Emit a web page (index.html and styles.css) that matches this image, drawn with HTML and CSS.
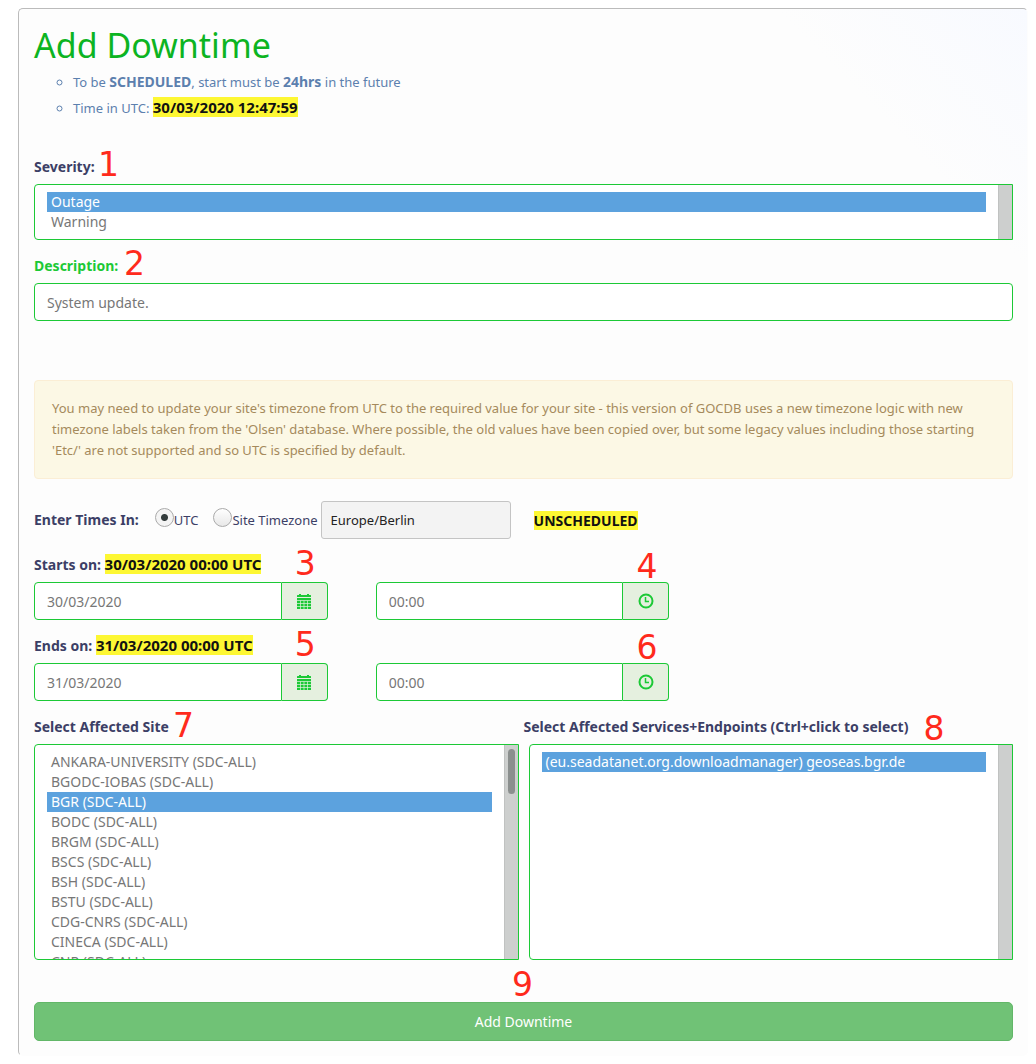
FILE: index.html
```html
<!DOCTYPE html>
<html lang="en">
<head>
<meta charset="utf-8">
<title>Add Downtime</title>
<link rel="stylesheet" href="styles.css">
</head>
<body>
<main class="panel">
  <h1 class="title">Add Downtime</h1>
  <ul class="notes">
    <li>To be <strong>SCHEDULED</strong>, start must be <strong>24hrs</strong> in the future</li>
    <li>Time in UTC: <mark>30/03/2020 12:47:59</mark></li>
  </ul>

  <form class="form">
    <div class="field severity">
      <label class="label" for="severity">Severity:</label>
      <span class="step step-1">1</span>
      <div class="list-box list-box-short">
        <select class="list" id="severity" size="2">
          <option selected>Outage</option>
          <option>Warning</option>
        </select>
        <span class="track"></span>
      </div>
    </div>

    <div class="field description">
      <label class="label label-valid" for="description">Description:</label>
      <span class="step step-2">2</span>
      <input class="control" id="description" type="text" value="System update.">
    </div>

    <p class="warning">You may need to update your site's timezone from UTC to the required value for your site - this version of GOCDB uses a new timezone logic with new timezone labels taken from the 'Olsen' database. Where possible, the old values have been copied over, but some legacy values including those starting 'Etc/' are not supported and so UTC is specified by default.</p>

    <div class="zone">
      <span class="label">Enter Times In:</span>
      <label class="choice"><input type="radio" name="zone" checked>UTC</label>
      <label class="choice"><input type="radio" name="zone">Site Timezone</label>
      <input class="zone-name" type="text" value="Europe/Berlin" aria-label="Site timezone" readonly>
      <mark class="status">UNSCHEDULED</mark>
    </div>

    <div class="field moment">
      <label class="label" for="start-date">Starts on: <mark>30/03/2020 00:00 UTC</mark></label>
      <div class="pickers">
        <div class="group">
          <span class="step step-date">3</span>
          <input class="control" id="start-date" type="text" value="30/03/2020">
          <button class="addon" type="button" aria-label="Pick start date"><svg class="icon" viewBox="0 0 16 16"><path d="M1 4V2.500Q1 2 1.500 2H3V1h2v1h6V1h2v1h1.500q.5 0 .5.500V4zM1 5h14v11H1z"/><path class="lines" d="M1 7.500h14M1 10.500h14M1 13.500h14M4.500 7.500V16M8 7.500V16M11.500 7.500V16"/></svg></button>
        </div>
        <div class="group">
          <span class="step step-time">4</span>
          <input class="control" type="text" value="00:00" aria-label="Start time">
          <button class="addon" type="button" aria-label="Pick start time"><svg class="icon clock-icon" viewBox="0 0 16 16"><circle cx="8" cy="8" r="6.500"/><path d="M7.500 4v4.500H11"/></svg></button>
        </div>
      </div>
    </div>

    <div class="field moment">
      <label class="label" for="end-date">Ends on: <mark>31/03/2020 00:00 UTC</mark></label>
      <div class="pickers">
        <div class="group">
          <span class="step step-date">5</span>
          <input class="control" id="end-date" type="text" value="31/03/2020">
          <button class="addon" type="button" aria-label="Pick end date"><svg class="icon" viewBox="0 0 16 16"><path d="M1 4V2.500Q1 2 1.500 2H3V1h2v1h6V1h2v1h1.500q.5 0 .5.500V4zM1 5h14v11H1z"/><path class="lines" d="M1 7.500h14M1 10.500h14M1 13.500h14M4.500 7.500V16M8 7.500V16M11.500 7.500V16"/></svg></button>
        </div>
        <div class="group">
          <span class="step step-time">6</span>
          <input class="control" type="text" value="00:00" aria-label="End time">
          <button class="addon" type="button" aria-label="Pick end time"><svg class="icon clock-icon" viewBox="0 0 16 16"><circle cx="8" cy="8" r="6.500"/><path d="M7.500 4v4.500H11"/></svg></button>
        </div>
      </div>
    </div>

    <div class="affected">
      <div class="field sites">
        <label class="label" for="sites">Select Affected Site</label>
        <span class="step step-7">7</span>
        <div class="list-box">
          <select class="list" id="sites" size="10">
            <option>ANKARA-UNIVERSITY (SDC-ALL)</option>
            <option>BGODC-IOBAS (SDC-ALL)</option>
            <option selected>BGR (SDC-ALL)</option>
            <option>BODC (SDC-ALL)</option>
            <option>BRGM (SDC-ALL)</option>
            <option>BSCS (SDC-ALL)</option>
            <option>BSH (SDC-ALL)</option>
            <option>BSTU (SDC-ALL)</option>
            <option>CDG-CNRS (SDC-ALL)</option>
            <option>CINECA (SDC-ALL)</option>
            <option>CNR (SDC-ALL)</option>
          </select>
          <span class="track"><span class="thumb"></span></span>
        </div>
      </div>
      <div class="field services">
        <label class="label" for="services">Select Affected Services+Endpoints (Ctrl+click to select)</label>
        <span class="step step-8">8</span>
        <div class="list-box">
          <select class="list" id="services" size="10" multiple>
            <option selected>(eu.seadatanet.org.downloadmanager) geoseas.bgr.de</option>
          </select>
          <span class="track"></span>
        </div>
      </div>
    </div>

    <div class="actions">
      <span class="step step-9">9</span>
      <button class="submit" type="submit">Add Downtime</button>
    </div>
  </form>
</main>
</body>
</html>
```
FILE: styles.css
```css
* { box-sizing: border-box; }

body {
  margin: 0;
  padding: 8px 8px 8px 18px;
  background: #fff;
  color: #3c3f66;
  font: 13px/20px "Noto Sans", sans-serif;
}

.panel {
  padding: 16px 14px 14px 15px;
  border: 1px solid #bbb;
  border-right-color: #fdfdfd;
  border-bottom-color: #fdfdfd;
  border-radius: 5px;
  background: linear-gradient(to bottom left, #f8faff, #fdfdfd 180px);
}

.title {
  margin: 0;
  color: #0cb422;
  font-size: 34px;
  font-weight: 400;
  line-height: 40px;
}

.notes {
  margin: 4px 0 36px;
  padding-left: 39px;
  color: #5c80ae;
  line-height: 26px;
  list-style: circle;
}

.notes li { height: 26px; }

mark {
  background: #fdf733;
  color: #111;
  font-size: 15px;
  font-weight: 700;
  line-height: 19px;
}

strong {
  font-size: 14px;
  font-weight: 700;
}

.field { position: relative; }

.label {
  display: block;
  height: 20px;
  margin-bottom: 7px;
  font-size: 14px;
  font-weight: 700;
}

.label-valid { color: #1cc936; }

.control {
  display: block;
  width: 100%;
  height: 38px;
  margin: 0;
  padding: 6px 12px;
  border: 1px solid #1cc936;
  border-radius: 4px;
  outline: 0;
  background: #fff;
  color: #777;
  font: 14px/20px "Noto Sans", sans-serif;
}

.list-box {
  display: flex;
  height: 216px;
  overflow: hidden;
  border: 1px solid #1cc936;
  border-radius: 4px 0 0 4px;
  background: #fff;
}

.list-box-short { height: 56px; }

.list {
  flex: 1;
  min-width: 0;
  height: 100%;
  margin: 0;
  padding: 7px 12px;
  border: 0;
  outline: 0;
  background: transparent;
  color: #777;
  font: 14px/20px "Noto Sans", sans-serif;
  scrollbar-width: none;
}

.list option {
  min-height: 20px;
  padding: 0 4px;
  line-height: 20px;
}

.list option:checked {
  background: #5ca2de linear-gradient(#5ca2de, #5ca2de);
  color: #fff;
}

.track {
  width: 14px;
  padding: 4px 3px;
  border-left: 1px solid #c0c2c1;
  background: #cdcfce;
}

.thumb {
  display: block;
  height: 45px;
  border-radius: 4px;
  background: #8b8f8e;
}

.severity { margin-bottom: 16px; }
.description { margin-bottom: 59px; }

.warning {
  margin: 0 0 22px;
  padding: 17px;
  border: 1px solid #fbeed5;
  border-radius: 4px;
  background: #fcf8e5;
  color: #a58a5c;
  line-height: 21px;
}

.zone {
  display: flex;
  align-items: center;
  margin-bottom: 16px;
}

.zone .label { margin: 0 16px 0 0; }

.choice {
  display: flex;
  align-items: center;
  margin-right: 15px;
}

.choice input {
  appearance: none;
  width: 19px;
  height: 19px;
  margin: 0 0 6px;
  border: 1px solid #aaa;
  border-radius: 50%;
  background: linear-gradient(#fff, #e8e8e8);
}

.choice input:checked { background: radial-gradient(circle, #333c3c 3px, #f4f4f4 4px); }

.choice + .choice { margin-right: 3px; }

.zone-name {
  width: 190px;
  height: 38px;
  padding: 0 9px;
  border: 1px solid #c4c4c4;
  border-radius: 3px;
  background: #f3f3f3;
  color: #222;
  font: inherit;
}

.status {
  margin-left: 23px;
  font-size: 14px;
}

.moment { margin-bottom: 16px; }

.pickers {
  display: flex;
  gap: 48px;
}

.group {
  position: relative;
  display: flex;
  width: 30%;
}

.group .control {
  flex: 1;
  min-width: 0;
  border-radius: 4px 0 0 4px;
}

.addon {
  display: grid;
  place-items: center;
  width: 46px;
  margin: 0;
  padding: 0;
  border: 1px solid #1cc936;
  border-left: 0;
  border-radius: 0 4px 4px 0;
  background: #e5f0df;
}

.icon {
  width: 16px;
  height: 16px;
  fill: #1cc936;
}

.lines {
  fill: none;
  stroke: #e5f0df;
  stroke-width: .7;
}

.clock-icon {
  fill: none;
  stroke: #1cc936;
  stroke-width: 2;
}

.clock-icon path { stroke-width: 1.500; }

.affected {
  display: grid;
  grid-template-columns: 1fr 1fr;
  margin-bottom: 42px;
}

.sites .list-box { margin-right: 5px; }
.services .list-box { margin-left: 5px; }

.actions { position: relative; }

.submit {
  display: block;
  width: 100%;
  height: 39px;
  border: 1px solid #62b768;
  border-radius: 5px;
  background: #70c276;
  color: #fff;
  font: 14px/20px "Noto Sans", sans-serif;
}

/* Numbered callouts laid over the form */
.step {
  position: absolute;
  z-index: 1;
  color: #ff2a1c;
  font: 33px/24px "DejaVu Sans", sans-serif;
  pointer-events: none;
}

.step-1 { top: -4px; left: 64px; }
.step-2 { top: -4px; left: 90px; }
.step-date { top: -30px; right: 12px; }
.step-time { top: -27px; right: 12px; }
.step-7 { top: -3px; left: 139px; }
.step-8 { top: 0; left: 400px; }
.step-9 { top: -29px; left: 478px; }
```
